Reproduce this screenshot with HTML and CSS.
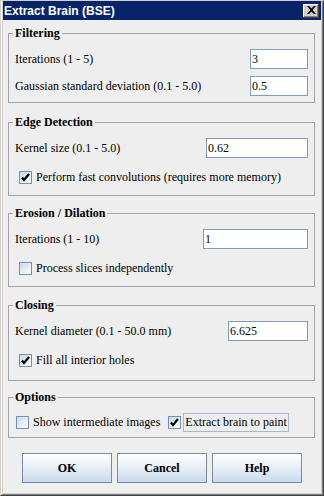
FILE: index.html
```html
<!DOCTYPE html>
<html>
<head>
<meta charset="utf-8">
<link rel="stylesheet" href="styles.css">
</head>
<body>
<div class="window">
  <div class="frame">
    <div class="titlebar">
      <span class="title">Extract Brain (BSE)</span>
      <span class="close"><svg width="9" height="8" viewBox="0 0 9 8"><path d="M0 0h2.2l2.3 2.6 2.3-2.6h2.2l-3.4 4 3.4 4h-2.2l-2.3-2.6-2.3 2.6h-2.2l3.4-4z" fill="#000"/></svg></span>
    </div>
    <div class="content">
      <fieldset class="group g-filter">
        <legend>Filtering</legend>
        <div class="row"><span class="label">Iterations (1 - 5)</span><input class="field w-filter" type="text" value="3"></div>
        <div class="row"><span class="label">Gaussian standard deviation (0.1 - 5.0)</span><input class="field w-filter" type="text" value="0.5"></div>
      </fieldset>
      <fieldset class="group g-edge">
        <legend>Edge Detection</legend>
        <div class="row"><span class="label">Kernel size (0.1 - 5.0)</span><input class="field w-edge" type="text" value="0.62"></div>
        <div class="check-row">
          <span class="box"><svg width="9" height="9" viewBox="0 0 9 9"><path d="M1 4.5l2 2.5 5-6" fill="none" stroke="#000" stroke-width="2.2"/></svg></span>
          <span class="check-label">Perform fast convolutions (requires more memory)</span>
        </div>
      </fieldset>
      <fieldset class="group g-erosion">
        <legend>Erosion / Dilation</legend>
        <div class="row"><span class="label">Iterations (1 - 10)</span><input class="field w-erosion" type="text" value="1"></div>
        <div class="check-row">
          <span class="box"></span>
          <span class="check-label">Process slices independently</span>
        </div>
      </fieldset>
      <fieldset class="group g-closing">
        <legend>Closing</legend>
        <div class="row"><span class="label">Kernel diameter (0.1 - 50.0 mm)</span><input class="field w-closing" type="text" value="6.625"></div>
        <div class="check-row">
          <span class="box"><svg width="9" height="9" viewBox="0 0 9 9"><path d="M1 4.5l2 2.5 5-6" fill="none" stroke="#000" stroke-width="2.2"/></svg></span>
          <span class="check-label">Fill all interior holes</span>
        </div>
      </fieldset>
      <fieldset class="group g-options">
        <legend>Options</legend>
        <div class="opt-row">
          <span class="box"></span>
          <span class="check-label">Show intermediate images</span>
          <span class="box box-2"><svg width="9" height="9" viewBox="0 0 9 9"><path d="M1 4.5l2 2.5 5-6" fill="none" stroke="#000" stroke-width="2.2"/></svg></span>
          <span class="check-label focus">Extract brain to paint</span>
        </div>
      </fieldset>
      <div class="buttons">
        <button class="btn">OK</button>
        <button class="btn">Cancel</button>
        <button class="btn">Help</button>
      </div>
    </div>
  </div>
</div>
</body>
</html>
```
FILE: styles.css
```css
html, body {
  margin: 0;
  padding: 0;
}
body {
  width: 324px;
  height: 496px;
  overflow: hidden;
  font: 12px/14px "Liberation Serif", "Times New Roman", serif;
  color: #000;
}
.window {
  box-sizing: border-box;
  width: 324px;
  height: 496px;
  border: 1px solid;
  border-color: #d4d0c8 #404040 #404040 #d4d0c8;
  background: #d4d0c8;
}
.frame {
  box-sizing: border-box;
  height: 100%;
  border: 1px solid;
  border-top: 0;
  border-color: #ffffff #808080 #808080 #ffffff;
  padding: 0 1px 1px 1px;
  display: flex;
  flex-direction: column;
}
.titlebar {
  height: 19px;
  flex: none;
  background: #0a246a;
  display: flex;
  align-items: center;
  justify-content: space-between;
  padding: 0 2px 0 1px;
}
.title {
  color: #fff;
  font: bold 12px/14px "Liberation Sans", Arial, sans-serif;
}
.close {
  box-sizing: border-box;
  width: 16px;
  height: 14px;
  background: #d4d0c8;
  box-shadow: inset -1px -1px #404040, inset 1px 1px #ffffff, inset -2px -2px #808080, inset 2px 2px #d4d0c8;
  display: flex;
  align-items: center;
  justify-content: center;
  padding: 0 0 1px 0;
}
.close svg { display: block; }
.content {
  flex: 1;
  background: #eeeeee;
  padding: 6px 6px 0 5px;
}
.group {
  margin: 0 0 12px 0;
  border: 1px solid #a3a3a3;
  padding: 9px 6px 6px 6px;
  min-width: 0;
}
.group legend {
  font-weight: bold;
  padding: 0 2px;
  margin-left: -2px;
  line-height: 14px;
}
.g-edge { margin-bottom: 10px; padding-bottom: 11px; }
.g-erosion { margin-bottom: 11px; padding-bottom: 11px; }
.g-closing { margin-bottom: 9px; padding-bottom: 13px; }
.g-options { padding-top: 9px; padding-bottom: 6px; margin-bottom: 15px; }
.row {
  display: flex;
  align-items: center;
  justify-content: space-between;
  height: 20px;
}
.row + .row { margin-top: 7px; }
.label { white-space: nowrap; }
.field {
  box-sizing: border-box;
  height: 20px;
  margin: 0;
  border: 1px solid #7f9db9;
  padding: 0 1px;
  background: #fff;
  font: 12px "Liberation Serif", "Times New Roman", serif;
  color: #000;
  outline: none;
}
.w-filter { width: 58px; }
.w-edge { width: 102px; }
.w-erosion { width: 105px; }
.w-closing { width: 80px; }
.check-row {
  display: flex;
  align-items: center;
  height: 14px;
  margin-top: 12px;
  padding-left: 4px;
}
.box {
  box-sizing: border-box;
  width: 13px;
  height: 13px;
  flex: none;
  border: 1px solid #7391b0;
  background: linear-gradient(135deg, #c9d6e5 0%, #e6edf5 55%, #fbfcfd 100%);
  display: flex;
  align-items: center;
  justify-content: center;
}
.box svg { display: block; }
.check-label {
  margin-left: 4px;
  white-space: nowrap;
}
.opt-row {
  display: flex;
  align-items: center;
  height: 18px;
  padding-left: 1px;
}
.box-2 { margin-left: 8px; }
.focus {
  margin-left: 2px;
  padding: 1px 1px 2px 1px;
  border: 1px solid #a8b8cc;
}
.buttons {
  display: flex;
  justify-content: center;
  gap: 5px;
  padding-left: 1px;
}
.btn {
  box-sizing: border-box;
  width: 90px;
  height: 30px;
  margin: 0;
  border: 1px solid #7a8ba0;
  background: linear-gradient(#ffffff 0%, #eef3f9 35%, #c9daec 100%);
  font: bold 12px "Liberation Serif", "Times New Roman", serif;
  color: #000;
  padding: 0;
}
```
